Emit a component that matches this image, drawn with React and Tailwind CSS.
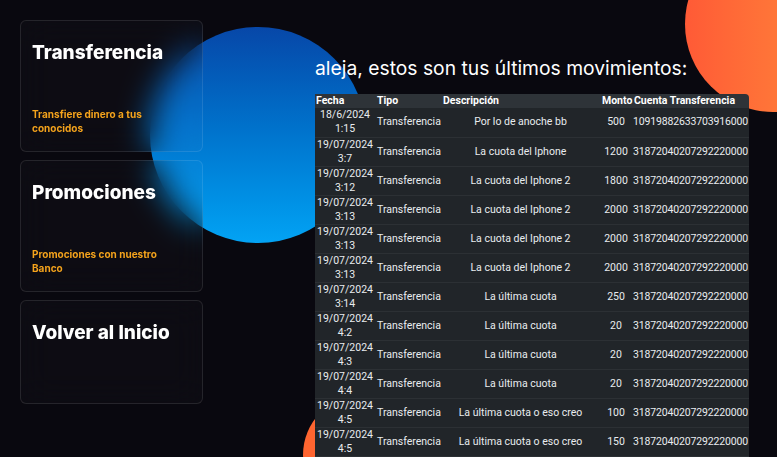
import React from "react";

const movimientos = [
  { fecha: "18/6/2024 1:15", tipo: "Transferencia", desc: "Por lo de anoche bb", monto: 500, cuenta: "10919882633703916000" },
  { fecha: "19/07/2024 3:7", tipo: "Transferencia", desc: "La cuota del Iphone", monto: 1200, cuenta: "31872040207292220000" },
  { fecha: "19/07/2024 3:12", tipo: "Transferencia", desc: "La cuota del Iphone 2", monto: 1800, cuenta: "31872040207292220000" },
  { fecha: "19/07/2024 3:13", tipo: "Transferencia", desc: "La cuota del Iphone 2", monto: 2000, cuenta: "31872040207292220000" },
  { fecha: "19/07/2024 3:13", tipo: "Transferencia", desc: "La cuota del Iphone 2", monto: 2000, cuenta: "31872040207292220000" },
  { fecha: "19/07/2024 3:13", tipo: "Transferencia", desc: "La cuota del Iphone 2", monto: 2000, cuenta: "31872040207292220000" },
  { fecha: "19/07/2024 3:14", tipo: "Transferencia", desc: "La última cuota", monto: 250, cuenta: "31872040207292220000" },
  { fecha: "19/07/2024 4:2", tipo: "Transferencia", desc: "La última cuota", monto: 20, cuenta: "31872040207292220000" },
  { fecha: "19/07/2024 4:3", tipo: "Transferencia", desc: "La última cuota", monto: 20, cuenta: "31872040207292220000" },
  { fecha: "19/07/2024 4:4", tipo: "Transferencia", desc: "La última cuota", monto: 20, cuenta: "31872040207292220000" },
  { fecha: "19/07/2024 4:5", tipo: "Transferencia", desc: "La última cuota o eso creo", monto: 100, cuenta: "31872040207292220000" },
  { fecha: "19/07/2024 4:5", tipo: "Transferencia", desc: "La última cuota o eso creo", monto: 150, cuenta: "31872040207292220000" },
  { fecha: "19/07/2024 4:6", tipo: "Transferencia", desc: "La última cuota o eso creo", monto: 150, cuenta: "31872040207292220000" },
];

const Card = ({ title, subtitle }) => (
  <div className="rounded-md border border-white/10 bg-white/[0.02] backdrop-blur-lg pl-[11px] pr-3 pt-[18px] pb-[16px]">
    <h2 className="text-[19px] leading-[28px] font-extrabold text-white mb-[40px]">{title}</h2>
    {subtitle && (
      <p className="text-[10px] leading-[14px] font-bold text-[#f4a31c] max-w-[140px]">{subtitle}</p>
    )}
  </div>
);

const App = () => {
  return (
    <div
      className="relative min-h-[457px] overflow-hidden bg-[#09080f] p-5"
      style={{ fontFamily: "Inter, 'Liberation Sans', sans-serif" }}
    >
      {/* circulos decorativos */}
      <div className="absolute left-[150px] top-[27px] h-[216px] w-[216px] rounded-full bg-linear-to-b from-[#0747a8] to-[#03a3f4]" />
      <div className="absolute left-[685px] top-[-64px] h-[176px] w-[176px] rounded-full bg-linear-to-r from-[#ff5a36] to-[#ff8c3a]" />
      <div className="absolute left-[303px] top-[395px] h-[120px] w-[120px] rounded-full bg-[#ff6530]" />

      <div className="relative flex">
        <div className="flex w-[183px] flex-col gap-2">
          <Card title="Transferencia" subtitle="Transfiere dinero a tus conocidos" />
          <Card title="Promociones" subtitle="Promociones con nuestro Banco" />
          <Card title="Volver al Inicio" />
        </div>

        <div className="ml-[112px] pt-[34px]">
          <h1 className="text-[19.3px] leading-[28px] text-white mb-3">
            aleja, estos son tus últimos movimientos:
          </h1>
          <table
            className="w-[434px] table-fixed border-collapse text-[10.5px] text-[#e9ecef]"
            style={{ fontFamily: "Roboto, 'Liberation Sans', sans-serif" }}
          >
            <colgroup>
              <col className="w-[60px]" />
              <col className="w-[66px]" />
              <col className="w-[159px]" />
              <col className="w-[32px]" />
              <col className="w-[117px]" />
            </colgroup>
            <thead>
              <tr className="bg-[#2e3338] text-white">
                <th className="h-[14px] px-[1px] text-left font-bold leading-[14px]">Fecha</th>
                <th className="h-[14px] px-[2px] text-left font-bold leading-[14px]">Tipo</th>
                <th className="h-[14px] px-[2px] text-left font-bold leading-[14px]">Descripción</th>
                <th className="h-[14px] px-[2px] text-left font-bold leading-[14px] whitespace-nowrap">Monto</th>
                <th className="h-[14px] pl-[2px] text-left font-bold leading-[14px] whitespace-nowrap rounded-tr-[4px]">Cuenta Transferencia</th>
              </tr>
            </thead>
            <tbody>
              {movimientos.map((m, i) => (
                <tr key={i} className="border-b border-[#2c3034] bg-[#212529]">
                  <td className="h-[29px] px-[2px] text-center leading-[14px]">{m.fecha}</td>
                  <td className="h-[29px] px-[2px] text-left leading-[14px]">{m.tipo}</td>
                  <td className="h-[29px] px-[2px] text-center leading-[14px]">{m.desc}</td>
                  <td className="h-[29px] px-[2px] text-center leading-[14px]">{m.monto}</td>
                  <td className="h-[29px] px-0 text-center leading-[14px] whitespace-nowrap tracking-[-0.15px]">{m.cuenta}</td>
                </tr>
              ))}
            </tbody>
          </table>
        </div>
      </div>
    </div>
  );
};

export default App;
